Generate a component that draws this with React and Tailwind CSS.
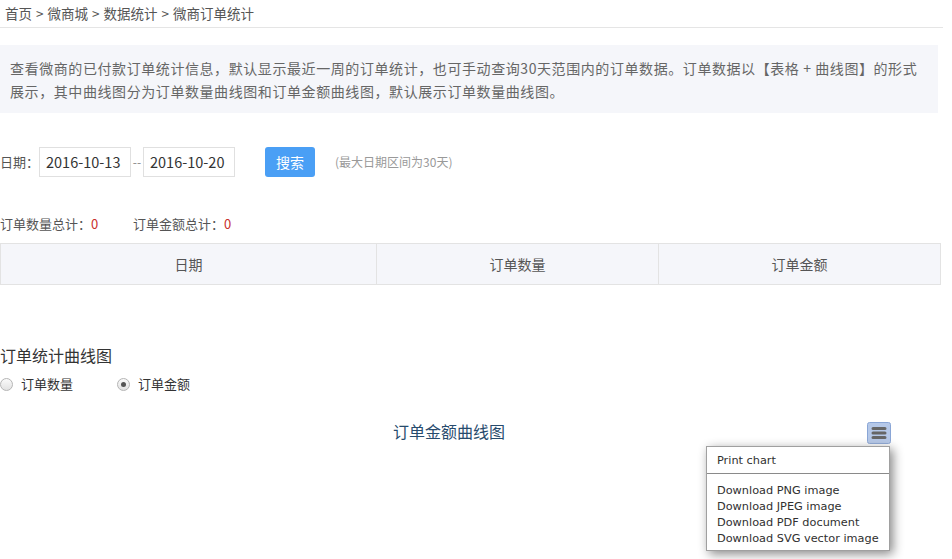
import React from "react";

function Radio({ checked }) {
  return (
    <span className="relative inline-block w-[13px] h-[13px] rounded-full border border-[#b5b5b5] bg-gradient-to-b from-[#fafafa] to-[#e2e2e2] shrink-0">
      {checked && (
        <span className="absolute left-[3px] top-[3px] w-[5px] h-[5px] rounded-full bg-[#555]" />
      )}
    </span>
  );
}

function Sep() {
  return <span className="mx-[4px]">&gt;</span>;
}

export default function App() {
  return (
    <div className="w-[952px] h-[559px] overflow-hidden bg-white text-[#555] font-['Noto_Sans_CJK_SC',sans-serif]">
      {/* breadcrumb */}
      <div className="w-[943px] h-[28px] border-b border-[#e5e5e5] pl-[5px] text-[13.5px] leading-[26px] text-[#555]">
        首页<Sep />微商城<Sep />数据统计<Sep />微商订单统计
      </div>

      {/* description */}
      <div className="mt-[17px] w-[938px] bg-[#f5f6fa] pl-[10px] pr-[6px] pt-[12px] pb-[10px] text-[14px] leading-[23px] tracking-[0.58px] text-[#666]">
        查看微商的已付款订单统计信息，默认显示最近一周的订单统计，也可手动查询30天范围内的订单数据。订单数据以【表格&nbsp;+&nbsp;曲线图】的形式
        <br />
        展示，其中曲线图分为订单数量曲线图和订单金额曲线图，默认展示订单数量曲线图。
      </div>

      {/* date row */}
      <div className="mt-[34px] flex items-center h-[30px]">
        <span className="w-[39px] text-[13px] text-[#555]">日期：</span>
        <div className="w-[92px] h-[30px] border border-[#e0e0e0] pl-[6px] text-[14.5px] leading-[28px] text-[#333]">2016-10-13</div>
        <span className="w-[12px] text-center text-[12px] text-[#888] leading-[28px]">--</span>
        <div className="w-[92px] h-[30px] border border-[#e0e0e0] pl-[6px] text-[14.5px] leading-[28px] text-[#333]">2016-10-20</div>
        <button className="ml-[30px] w-[50px] h-[30px] rounded-[3px] bg-[#4a9ff5] text-white text-[14px] leading-[30px]">搜索</button>
        <span className="ml-[20px] text-[12px] text-[#999]">(最大日期区间为30天)</span>
      </div>

      {/* totals */}
      <div className="mt-[37px] flex h-[20px] items-center text-[13px] leading-[20px] text-[#555]">
        <span className="w-[133px]">订单数量总计：<span className="text-[#c9302c]">0</span></span>
        <span>订单金额总计：<span className="text-[#c9302c]">0</span></span>
      </div>

      {/* table header */}
      <div className="mt-[9px] w-[941px] h-[42px] border border-[#e3e3e3] bg-[#f5f6fa] flex text-[14px] text-[#555]">
        <div className="w-[375px] flex items-center justify-center">日期</div>
        <div className="w-[282px] border-l border-[#e3e3e3] flex items-center justify-center">订单数量</div>
        <div className="flex-1 border-l border-[#e3e3e3] flex items-center justify-center">订单金额</div>
      </div>

      {/* chart section */}
      <div className="mt-[58px] text-[16px] leading-[24px] text-[#333]">订单统计曲线图</div>
      <div className="mt-[7px] flex items-center h-[20px] text-[13px] text-[#333]">
        <Radio />
        <span className="ml-[8px] w-[96px]">订单数量</span>
        <Radio checked />
        <span className="ml-[8px]">订单金额</span>
      </div>

      <div className="relative w-[898px] h-[200px]">
        <div className="pt-[26px] text-center text-[16px] leading-[22px] text-[#274b6d]">订单金额曲线图</div>

        <svg className="absolute left-[867px] top-[28px]" width="24" height="22" viewBox="0 0 24 22">
          <rect x="0.5" y="0.5" width="23" height="21" rx="2" fill="#b5c8e8" stroke="#8aa6d6" />
          <path d="M6 6.5H18M6 11H18M6 15.5H18" stroke="#666" strokeWidth="3" strokeLinecap="round" />
        </svg>

        <div className="absolute left-[706px] top-[52px] w-[184px] border border-[#a0a0a0] bg-white pt-[6px] pb-[3px] shadow-[3px_3px_10px_#888] font-['DejaVu_Sans',sans-serif] text-[11.3px] leading-[16px] text-[#303030]">
          <div className="px-[10px]">Print chart</div>
          <div className="mt-[4px] mb-[9px] border-t border-[#8a8a8a]" />
          <div className="px-[10px]">Download PNG image</div>
          <div className="px-[10px]">Download JPEG image</div>
          <div className="px-[10px]">Download PDF document</div>
          <div className="px-[10px]">Download SVG vector image</div>
        </div>
      </div>
    </div>
  );
}
